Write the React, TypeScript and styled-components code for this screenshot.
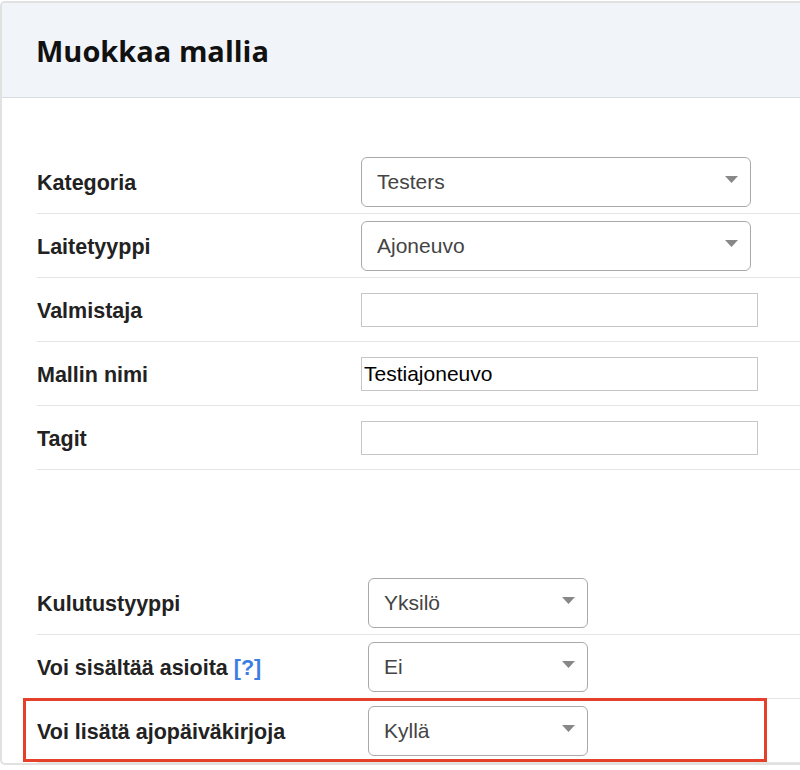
import React from "react";
import styled, { createGlobalStyle } from "styled-components";

const GlobalStyle = createGlobalStyle`
  html, body {
    margin: 0;
    padding: 0;
    background: #ffffff;
    overflow: hidden;
  }
  body {
    font-family: "Liberation Sans", Arial, sans-serif;
  }
  * { box-sizing: border-box; }
`;

const Panel = styled.div`
  margin-top: 1px;
  width: 100%;
  border: 2px solid #e1e1e1;
  border-right: none;
  border-radius: 5px 0 0 5px;
  background: #ffffff;
  overflow: hidden;
`;

const Header = styled.div`
  height: 95px;
  background: #f1f5fa;
  border-bottom: 1px solid #d7dce2;
  display: flex;
  align-items: center;
  padding-left: 34px;
`;

const Title = styled.h1`
  margin: 0;
  font-family: "Open Sans", "DejaVu Sans", sans-serif;
  font-weight: 700;
  font-size: 29px;
  color: #111111;
`;

const Body = styled.div`
  padding: 52px 0 0 35px;
  display: flex;
  flex-direction: column;
  gap: 101px;
`;

const Table = styled.div`
  display: flex;
  flex-direction: column;
`;

const Row = styled.div<{ $labelWidth: number }>`
  position: relative;
  display: grid;
  grid-template-columns: ${(p) => p.$labelWidth}px 1fr;
  align-items: center;
  height: 64px;
  border-bottom: 1px solid #e4e4e4;
`;

const Label = styled.div`
  padding-top: 3px;
  font-family: "Liberation Sans", Arial, sans-serif;
  font-weight: 700;
  font-size: 21.5px;
  color: #222222;
  white-space: nowrap;
`;

const Help = styled.span`
  color: #3b7de0;
`;

const SelectBox = styled.div<{ $width: number }>`
  width: ${(p) => p.$width}px;
  height: 50px;
  border: 1px solid #a9a9a9;
  border-radius: 6px;
  display: flex;
  align-items: center;
  justify-content: space-between;
  padding: 0 12px 0 15px;
  font-family: "Liberation Sans", Arial, sans-serif;
  font-size: 21px;
  color: #444444;
  background: #ffffff;
`;

const Arrow = styled.svg`
  width: 13px;
  height: 7px;
  margin-top: -4px;
  fill: #888888;
`;

const TextInput = styled.input`
  width: 397px;
  height: 34px;
  border: 1px solid #c6c6c6;
  border-radius: 0;
  padding: 0 2px;
  font-family: "Liberation Sans", Arial, sans-serif;
  font-size: 21px;
  color: #000000;
  background: #ffffff;
  outline: none;
`;

const Highlight = styled.div`
  position: absolute;
  left: -14px;
  top: -1px;
  width: 744px;
  height: 64px;
  border: 3px solid #e5402a;
  pointer-events: none;
`;

function Select({ value, width }: { value: string; width: number }) {
  return (
    <SelectBox $width={width}>
      <span>{value}</span>
      <Arrow viewBox="0 0 13 7">
        <polygon points="0,0 13,0 6.5,7" />
      </Arrow>
    </SelectBox>
  );
}

export default function App() {
  return (
    <>
      <GlobalStyle />
      <Panel>
        <Header>
          <Title>Muokkaa mallia</Title>
        </Header>
        <Body>
          <Table>
            <Row $labelWidth={324}>
              <Label>Kategoria</Label>
              <Select value="Testers" width={390} />
            </Row>
            <Row $labelWidth={324}>
              <Label>Laitetyyppi</Label>
              <Select value="Ajoneuvo" width={390} />
            </Row>
            <Row $labelWidth={324}>
              <Label>Valmistaja</Label>
              <TextInput readOnly value="" />
            </Row>
            <Row $labelWidth={324}>
              <Label>Mallin nimi</Label>
              <TextInput readOnly value="Testiajoneuvo" />
            </Row>
            <Row $labelWidth={324}>
              <Label>Tagit</Label>
              <TextInput readOnly value="" />
            </Row>
          </Table>
          <Table>
            <Row $labelWidth={331}>
              <Label>Kulutustyyppi</Label>
              <Select value="Yksilö" width={220} />
            </Row>
            <Row $labelWidth={331}>
              <Label>
                Voi sisältää asioita <Help>[?]</Help>
              </Label>
              <Select value="Ei" width={220} />
            </Row>
            <Row $labelWidth={331}>
              <Label>Voi lisätä ajopäiväkirjoja</Label>
              <Select value="Kyllä" width={220} />
              <Highlight />
            </Row>
          </Table>
        </Body>
      </Panel>
    </>
  );
}
